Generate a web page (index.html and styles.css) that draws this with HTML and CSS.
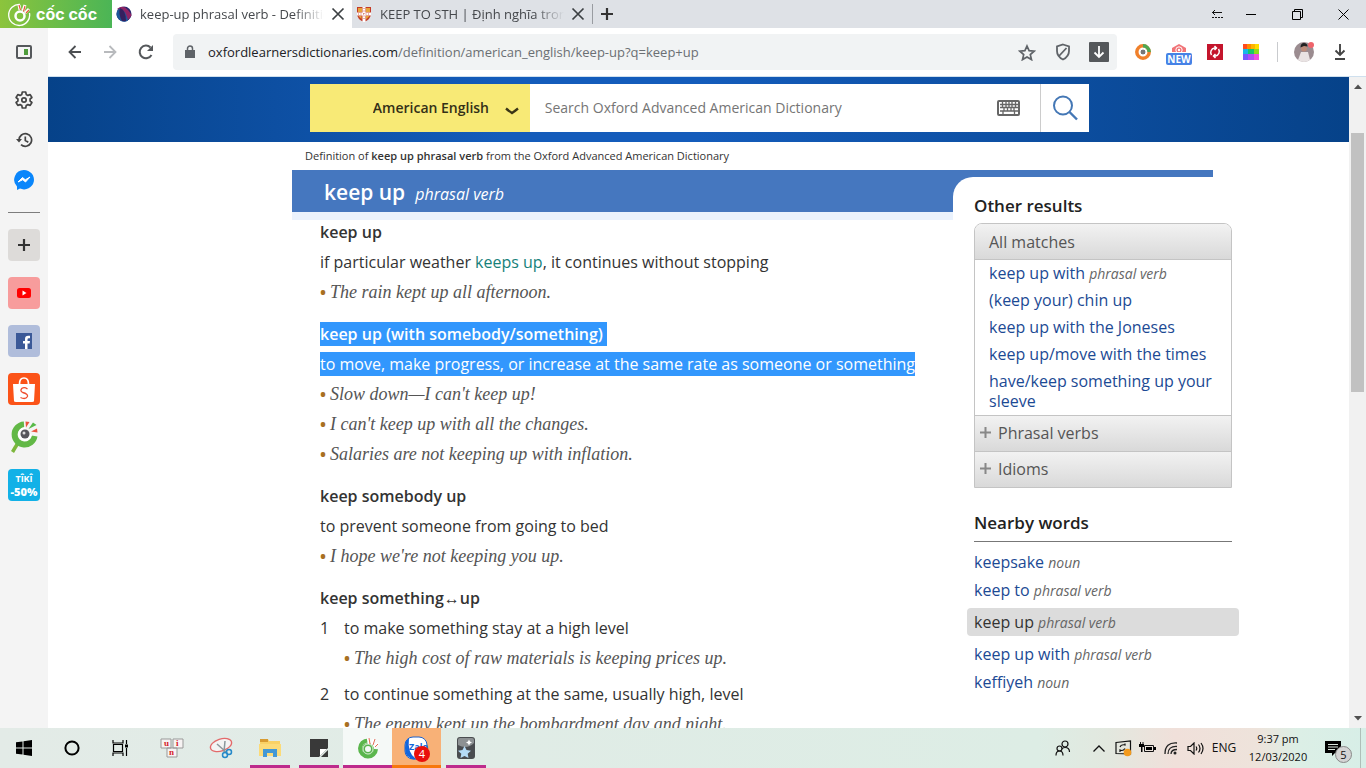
FILE: index.html
```html
<!DOCTYPE html>
<html lang="en">
<head>
<meta charset="utf-8">
<title>keep-up phrasal verb - Definition</title>
<link rel="stylesheet" href="styles.css">
</head>
<body>
<svg class="defs" aria-hidden="true">
  <symbol id="x" viewBox="0 0 14 14"><path d="M1.500 1.500l11 11M12.500 1.500l-11 11" stroke="#3c4043" stroke-width="1.700" fill="none"/></symbol>
  <symbol id="plus" viewBox="0 0 12 12"><path d="M6 0v12M0 6h12" stroke="currentColor" stroke-width="2.200"/></symbol>
  <symbol id="coc" viewBox="0 0 32 32">
    <path d="M10.500 21L4.500 31" stroke="#7db63c" stroke-width="3.500"/>
    <path d="M16 3.500A10 10 0 1 0 26.500 15" fill="none" stroke="#62b846" stroke-width="6"/>
    <path d="M17 6a7 7 0 1 0 7 8l-5-4z" fill="#fff"/>
    <circle cx="17" cy="13" r="4.500" fill="#56565b"/><circle cx="16" cy="12" r="1.500" fill="#ddd"/>
    <path d="M18 6.500L17.500.500l4 .5zM23 10.500l6-3 .5 4z" fill="#e9543d"/><path d="M20.500 8L25 1.500l3.500 2.500z" fill="#57b947"/>
  </symbol>
</svg>
<div class="window">
  <header class="tabs">
    <button class="brand" aria-label="Menu">
      <svg width="24" height="26" viewBox="0 0 24 26" fill="none" stroke="#fff"><path d="M12 3.500A10.500 10.500 0 1 0 21.500 12" stroke-width="1.300"/><circle cx="12" cy="15" r="4.500" stroke-width="2.500"/><path d="M12 9l-1-5M15 10l2-6M17 12l4-4" stroke-width="3"/><path d="M12.500 9l-1.500-5" stroke="#e8593e" stroke-width="1.200"/><path d="M15.500 10.500l1.500-5.500M18 12l3-3" stroke="#e8593e" stroke-width="1.200"/></svg>
      <span>cốc cốc</span>
    </button>
    <div class="tab tab-active">
      <svg width="16" height="16" viewBox="0 0 16 16"><circle cx="8" cy="8" r="7.500" fill="#29266e"/><path d="M1 3q6-5 11 1t3 6Q12 15 8 15.500 10 8 1 3z" fill="#8e2364"/><path d="M3 2.500q5 1 7 6t2 6A7.500 7.500 0 0 1 5 15Q.500 12 .500 8 .500 4.500 3 2.500z" fill="#1d579b"/><path d="M4 2q6 2 6 13L6 15Q2 8 4 2z" fill="#34205f"/></svg>
      <span class="tab-title">keep-up phrasal verb - Definition</span>
      <button class="icon close" aria-label="Close tab"><svg width="14" height="14"><use href="#x"/></svg></button>
    </div>
    <div class="tab">
      <svg width="16" height="16" viewBox="0 0 16 16"><path d="M1 1h14v7q0 5-7 8-7-3-7-8z" fill="#c43a26"/><path d="M2 2h4v4H2zM10 2h4v4h-4zM2.500 10h3v3zM10 10h3.500L10 13.500z" fill="#e7a43b"/><path d="M8 1v15M1 8h14" stroke="#fff" stroke-width="3"/><path d="M8 2v12M2 8h12" stroke="#c43a26" stroke-width=".8" stroke-dasharray="1 1.500"/></svg>
      <span class="tab-title">KEEP TO STH | Định nghĩa trong</span>
      <button class="icon close" aria-label="Close tab"><svg width="14" height="14"><use href="#x"/></svg></button>
    </div>
    <button class="icon new-tab" aria-label="New tab"><svg width="12" height="12"><use href="#plus"/></svg></button>
    <div class="controls">
      <button class="icon pin" aria-label="Tab options"><svg width="12" height="10" viewBox="0 0 12 10" stroke="#111" fill="none"><path d="M1 3.500h10M4 1L1.500 3.500 4 6M1 8.500h2m1 0h2m1 0h2m1 0h2"/></svg></button>
      <button class="icon" aria-label="Minimize"><svg width="10" height="10"><path d="M0 5.500h10" stroke="#000"/></svg></button>
      <button class="icon" aria-label="Restore"><svg width="11" height="11" fill="none" stroke="#000"><path d="M.5 2.500h8v8h-8zM2.500 2.500v-2h8v8h-2"/></svg></button>
      <button class="icon" aria-label="Close"><svg width="11" height="11" stroke="#000"><path d="M.5.500l10 10M10.500.500l-10 10"/></svg></button>
    </div>
  </header>

  <nav class="sidebar" aria-label="Shortcuts">
    <button class="icon" aria-label="Panel"><svg width="16" height="14" viewBox="0 0 16 14"><rect x="1" y="1" width="14" height="12" rx="1" fill="none" stroke="#55585b" stroke-width="2"/><path d="M8 4h4v6H8z" fill="#4f9c3c"/></svg></button>
    <button class="icon settings" aria-label="Settings"><svg width="18" height="18" viewBox="0 0 18 18" fill="none" stroke="#444" stroke-width="1.700" stroke-linejoin="round"><path d="M7.300 1h3.400l.5 2.400 1.700 1 2.300-.8 1.700 2.900L15.100 8v2l1.800 1.500-1.700 2.900-2.300-.8-1.700 1-.5 2.400H7.300l-.5-2.400-1.700-1-2.300.8-1.700-2.900L2.900 10V8L1.100 6.500l1.700-2.900 2.300.8 1.700-1z"/><circle cx="9" cy="9" r="2.200"/></svg></button>
    <button class="icon" aria-label="History"><svg width="17" height="16" viewBox="0 0 17 16" fill="none" stroke="#444" stroke-width="1.700"><path d="M3 8a6.300 6.300 0 1 1 2 4.600M9.300 4.500V8.500l3 1.700"/><path d="M0 7h6L3 10.500z" fill="#444" stroke="none"/></svg></button>
    <button class="icon" aria-label="Messenger"><svg width="20" height="20" viewBox="0 0 20 20"><path d="M10 0a10 9.700 0 1 1-4 18.600L3 20v-3.500A9.700 9.700 0 0 1 10 0z" fill="#0a86fb"/><path d="M4 12l4.500-4.500 2.800 2.300L16 7l-4.500 5L8.800 9.700z" fill="#fff" stroke="#fff"/></svg></button>
    <hr>
    <button class="tile tile-add" aria-label="Add"><svg width="12" height="12"><use href="#plus"/></svg></button>
    <button class="tile tile-youtube" aria-label="YouTube"><svg width="14" height="10"><rect width="14" height="10" rx="2.500" fill="#f00"/><path d="M5.500 2.500v5l4-2.500z" fill="#fff"/></svg></button>
    <button class="tile tile-facebook" aria-label="Facebook"><svg width="16" height="16"><path d="M0 0h16v16H0z" fill="#3b5998"/><path d="M9 16v-5.500H7V8h2V6q0-3.200 3.200-3.200H14v2.500h-1.200Q11.500 5.300 11.500 6.500V8H14l-.4 2.500h-2.100V16z" fill="#fff"/></svg></button>
    <button class="tile tile-shopee" aria-label="Shopee"><svg width="26" height="28" viewBox="0 0 26 28" fill="none"><path d="M2 9h22l-1 17q0 1-2 1H5q-2 0-2-1z" fill="#fff"/><path d="M8.500 9q0-6 4.500-6t4.500 6" stroke="#fff" stroke-width="1.700"/><path d="M16.500 14q-3-2.200-5.500-.7-2.500 2.700.7 4.200 5.500 1.500 4.800 4-2 3.500-7 1" stroke="#ee4d2d" stroke-width="1.300"/></svg></button>
    <button class="tile" aria-label="Cốc Cốc"><svg width="32" height="32"><use href="#coc"/></svg></button>
    <button class="tile tile-tiki"><span>TÎKÎ</span><b>-50%</b></button>
  </nav>

  <div class="toolbar">
    <button class="icon" aria-label="Back"><svg width="13" height="14" viewBox="0 0 13 14" fill="none" stroke="#4c4f52" stroke-width="1.800"><path d="M13 7H1.500M7.500 1L1.500 7l6 6"/></svg></button>
    <button class="icon" aria-label="Forward"><svg width="13" height="14" viewBox="0 0 13 14" fill="none" stroke="#b8babd" stroke-width="1.800"><path d="M0 7h11.500M5.500 1l6 6-6 6"/></svg></button>
    <button class="icon" aria-label="Reload"><svg width="16" height="16" viewBox="0 0 16 16"><path d="M13.500 11A6.300 6.300 0 1 1 12.500 3.500" fill="none" stroke="#55585b" stroke-width="2"/><path d="M15 1v6H9z" fill="#55585b"/></svg></button>
    <div class="address">
      <svg width="10" height="14" viewBox="0 0 10 14"><path d="M0 5h10v8H0z" fill="#5f6368"/><path d="M2.500 6V3.500a2.500 2.500 0 0 1 5 0V6" fill="none" stroke="#5f6368" stroke-width="1.500"/></svg>
      <div class="url" role="textbox" contenteditable="true" spellcheck="false" aria-label="Address"><b>oxfordlearnersdictionaries.com</b>/definition/american_english/keep-up?q=keep+up</div>
      <button class="icon" aria-label="Bookmark"><svg width="18" height="17" viewBox="0 0 18 17"><path d="M9 2l2.100 4.700 5 .5-3.800 3.400 1.200 5L9 12.900l-4.500 2.700 1.200-5-3.800-3.400 5-.5z" fill="none" stroke="#5f6368" stroke-width="1.700"/></svg></button>
      <button class="icon" aria-label="Blocker"><svg width="16" height="18" viewBox="0 0 16 18" fill="none" stroke="#5f6368" stroke-width="1.800"><path d="M8 1.500l6 2V8q0 5.500-6 8.500Q2 13.500 2 8V3.500zM4 13l7.500-8"/></svg></button>
      <button class="icon" aria-label="Save"><svg width="20" height="20"><rect width="20" height="20" rx="1" fill="#55585b"/><path d="M10 4v11M5.500 10.500L10 15l4.500-4.500" fill="none" stroke="#fff" stroke-width="1.800"/></svg></button>
    </div>
    <div class="extensions">
      <button class="icon" aria-label="Extension"><svg width="18" height="18" viewBox="0 0 18 18" fill="none"><circle cx="9" cy="9" r="6.200" stroke="#f0802b" stroke-width="3.500"/><path d="M9 2.800A6.200 6.200 0 0 1 15.200 9" stroke="#4ea853" stroke-width="3.500"/><circle cx="9" cy="9" r="3" fill="#777" stroke="#fff"/></svg></button>
      <button class="icon" aria-label="New extension"><svg width="26" height="28" viewBox="0 0 26 28"><path d="M6 14V10l7-4 7 4v4z" fill="#f17478"/><circle cx="13" cy="12" r="3.200" fill="none" stroke="#fff"/><circle cx="13" cy="12" r="1.200" fill="#fff"/><rect y="15" width="26" height="12" rx="2" fill="#4682e6"/><text x="13" y="25" text-anchor="middle" class="badge-new">NEW</text></svg></button>
      <button class="icon" aria-label="Sync"><svg width="16" height="16" fill="none" stroke="#fff" stroke-width="1.500"><path d="M0 0h16v16H0z" fill="#c4152c" stroke="none"/><path d="M4.500 11A4.500 4.500 0 0 1 7.500 4h1.500M11.500 5A4.500 4.500 0 0 1 8.500 12H7M7.500 2l2 2-2 2M8.500 10l-2 2 2 2"/></svg></button>
      <button class="icon" aria-label="Colours"><svg width="16" height="16"><path d="M0 0h4v5H0z" fill="#ff4b1f"/><path d="M4 0h4v5H4z" fill="#ff8a00"/><path d="M8 0h4v5H8z" fill="#ffb400"/><path d="M12 0h4v5h-4z" fill="#ffdc00"/><path d="M0 5h5v5H0z" fill="#17b8e8"/><path d="M5 5h6v5H5z" fill="#15c76c"/><path d="M11 5h5v5h-5z" fill="#8ddb1d"/><path d="M0 10h5v6H0z" fill="#7557ff"/><path d="M5 10h6v6H5z" fill="#b14cf5"/><path d="M11 10h5v6h-5z" fill="#f14de0"/></svg></button>
    </div>
    <div class="account">
      <button class="icon" aria-label="Profile"><svg width="20" height="20"><circle cx="10" cy="10" r="10" fill="#9b8c90"/><path d="M4 18l3-8h7l2 8q-6 4-12 0z" fill="#e9e3e3"/><circle cx="10" cy="6.500" r="3" fill="#bd8c7a"/><path d="M6.500 5.500q0-4.500 3.500-4.500t3.500 3.500l-3.500-.5z" fill="#222"/><circle cx="17" cy="3" r="3" fill="#ef646b"/></svg></button>
      <button class="icon" aria-label="Downloads"><svg width="12" height="16" fill="none" stroke="#444" stroke-width="1.900"><path d="M6 0v11M1.500 6.500L6 11l4.500-4.500M1 15h10"/></svg></button>
    </div>
  </div>

  <div class="viewport">
    <main class="page">
      <form class="search-band">
        <div class="search">
          <label class="dict">
            <select aria-label="Dictionary"><option>American English</option></select>
            <svg class="chevron" width="14" height="8" viewBox="0 0 14 8"><path d="M1 1.500q3 2.500 6 4.500 3-2 6-4.500" fill="none" stroke="#3a3516" stroke-width="2.300"/></svg>
          </label>
          <input type="text" placeholder="Search Oxford Advanced American Dictionary" aria-label="Search">
          <button type="button" class="icon keyboard" aria-label="Keyboard"><svg width="24" height="16" viewBox="0 0 24 16"><rect x="1" y="1" width="21" height="14" rx="1" fill="#fff" stroke="#666" stroke-width="2"/><path d="M3 4.500h18M3 7.500h18M3 11h18" stroke="#666" stroke-width="1.400"/><path d="M5.500 2v6M9 2v5M12 2v5M15 2v5M18.500 2v6M7 7v4M10.500 7v4M14 7v4M17 7v4M6 11v3M17.500 11v3" stroke="#666" stroke-width="1.300"/></svg></button>
          <button type="submit" class="icon go" aria-label="Search"><svg width="26" height="26" viewBox="0 0 26 26" fill="none" stroke="#4477b5" stroke-width="2"><circle cx="11" cy="10.500" r="9"/><path d="M17.500 17l7.500 7.500" stroke-width="2.400"/></svg></button>
        </div>
      </form>
      <p class="crumb">Definition of <b>keep up phrasal verb</b> from the Oxford Advanced American Dictionary</p>
      <div class="entry">
        <article>
          <header class="title"><h1>keep up</h1><em>phrasal verb</em></header>
          <div class="senses">
            <section>
              <h2>keep up</h2>
              <p>if particular weather <a href="#keep" class="term">keeps up</a>, it continues without stopping</p>
              <ul><li>The rain kept up all afternoon.</li></ul>
            </section>
            <section>
              <h2><mark class="selected-head">keep up (with somebody/something)</mark></h2>
              <p><mark>to move, make progress, or increase at the same rate as someone or something</mark></p>
              <ul><li>Slow down—I can't keep up!</li><li>I can't keep up with all the changes.</li><li>Salaries are not keeping up with inflation.</li></ul>
            </section>
            <section>
              <h2>keep somebody up</h2>
              <p>to prevent someone from going to bed</p>
              <ul><li>I hope we're not keeping you up.</li></ul>
            </section>
            <section>
              <h2>keep something↔up</h2>
              <ol>
                <li><p>to make something stay at a high level</p><ul><li>The high cost of raw materials is keeping prices up.</li></ul></li>
                <li><p>to continue something at the same, usually high, level</p><ul><li>The enemy kept up the bombardment day and night.</li></ul></li>
              </ol>
            </section>
          </div>
        </article>
        <div class="aside-wrap">
          <aside>
            <h3>Other results</h3>
            <div class="accordion">
              <h4 class="bar bar-open">All matches</h4>
              <ul class="matches">
                <li><a href="#m1">keep up with <i>phrasal verb</i></a></li>
                <li><a href="#m2">(keep your) chin up</a></li>
                <li><a href="#m3">keep up with the Joneses</a></li>
                <li><a href="#m4">keep up/move with the times</a></li>
                <li><a href="#m5">have/keep something up your sleeve</a></li>
              </ul>
              <button class="bar"><svg width="11" height="11"><use href="#plus"/></svg>Phrasal verbs</button>
              <button class="bar"><svg width="11" height="11"><use href="#plus"/></svg>Idioms</button>
            </div>
            <h3 class="nearby-title">Nearby words</h3>
            <ul class="nearby">
              <li><a href="#n1">keepsake <i>noun</i></a></li>
              <li><a href="#n2">keep to <i>phrasal verb</i></a></li>
              <li class="current"><a href="#n3">keep up <i>phrasal verb</i></a></li>
              <li><a href="#n4">keep up with <i>phrasal verb</i></a></li>
              <li><a href="#n5">keffiyeh <i>noun</i></a></li>
            </ul>
          </aside>
        </div>
      </div>
    </main>
    <div class="scrollbar" aria-hidden="true">
      <svg width="8" height="5"><path d="M0 5l4-4.500L8 5z" fill="#505050"/></svg>
      <div class="track"><div class="thumb"></div></div>
      <svg width="8" height="5"><path d="M0 0l4 4.500L8 0z" fill="#505050"/></svg>
    </div>
  </div>

  <footer class="taskbar">
    <div class="system">
      <button class="icon" aria-label="Start"><svg width="16" height="16"><path d="M0 2.300l6.500-.9v6.100H0zM7.500 1.200L16 0v7.500H7.500zM0 8.500h6.500v6.100L0 13.700zM7.500 8.500H16V16l-8.500-1.200z"/></svg></button>
      <button class="icon" aria-label="Cortana"><svg width="16" height="16"><circle cx="8" cy="8" r="6.600" fill="none" stroke="#000" stroke-width="2"/></svg></button>
      <button class="icon" aria-label="Task view"><svg width="17" height="16" fill="none" stroke="#000" stroke-width="1.200"><path d="M1 0v3h10V0M1 16v-3h10v3M1.500 4.500h9v7h-9zM14.500 0v4M14.500 8v8"/><path d="M13 4.500h3v3h-3z" fill="#000" stroke="none"/></svg></button>
    </div>
    <div class="apps">
      <button class="icon" aria-label="UniKey"><svg width="24" height="20" viewBox="0 0 24 20"><g fill="#f7f3f3" stroke="#999"><path d="M1 1h10v9H1zM13 1h10v9H13zM7 10h10v9H7z"/></g><g class="key-letter"><text x="4" y="8">u</text><text x="16" y="8">i</text><text x="9" y="17">n</text></g></svg></button>
      <button class="icon" aria-label="Snipping Tool"><svg width="24" height="22" viewBox="0 0 24 22" fill="none"><ellipse cx="12" cy="8" rx="11" ry="6" transform="rotate(-18 12 8)" fill="#f4f4f4" stroke="#e36a6a" stroke-width="1.300"/><path d="M8 7l9 8M16 4l-1 11" stroke="#8b979c" stroke-width="1.500"/><circle cx="16" cy="18" r="2.500" stroke="#2689c9" stroke-width="1.500"/><circle cx="20" cy="15" r="2.500" stroke="#2689c9" stroke-width="1.500"/></svg></button>
      <button class="icon running" aria-label="File Explorer"><svg width="22" height="18" viewBox="0 0 22 18"><path d="M1 0h8l1 2h11v15H1z" fill="#f9d165"/><path d="M1 0h8v3H1z" fill="#d89b31"/><path d="M0 5h22v12H0z" fill="#fcdb78"/><path d="M4 18v-8h14v8h-4v-4H8v4z" fill="#4298d5"/></svg></button>
      <button class="icon running" aria-label="Sticky Notes"><svg width="18" height="18"><path d="M0 0h18v9l-9 9H0z" fill="#393939"/><path d="M10 17v-7h7z" fill="#fff"/><path d="M18 11v7h-7z" fill="#393939"/></svg></button>
      <button class="icon running active" aria-label="Cốc Cốc"><svg width="22" height="22" viewBox="0 0 22 22" fill="none"><path d="M11 3.500A8 8 0 1 0 19 12" stroke="#5bb64d" stroke-width="4"/><circle cx="11" cy="12" r="4.500" stroke="#59b34e" stroke-width="3"/><circle cx="11" cy="12" r="5" stroke="#d9f0d4"/><path d="M12 7l-1-6M15 8l2-6M17 10l4-4" stroke="#fff" stroke-width="2.500"/><path d="M13 7l-1-6M16 8l2-6M18 10l3-3" stroke="#e46b58"/></svg></button>
      <button class="icon alert" aria-label="Zalo, 4 new"><svg width="26" height="26" viewBox="0 0 26 26"><rect x="1" y="2" width="22" height="22" rx="8" fill="#fff" stroke="#1d61cb"/><path d="M5 3Q1 5 1 13t4 9q2 3 7 2Q3 18 5 3z" fill="#1366dd"/><text x="5" y="15" class="zalo">Zalo</text></svg><span class="count">4</span></button>
      <button class="icon running" aria-label="Media"><svg width="18" height="22" viewBox="0 0 18 22"><rect width="18" height="22" rx="3" fill="#4a4d50"/><path d="M1 8Q10 13 17 6V3q0-2-2-2H3Q1 1 1 3z" fill="#8d9193"/><path d="M7.500 9l2 4 4.500.7-3.300 3 .8 4.300-4-2-4 2 .8-4.300-3.300-3 4.500-.7z" fill="#b5dcf7"/><path d="M12 2.500l1 2 2 1-2 1-1 2-1-2-2-1 2-1z" fill="#fff"/></svg></button>
    </div>
    <div class="tray">
      <button class="icon people" aria-label="People"><svg width="16" height="16" fill="none" stroke="#111" stroke-width="1.200"><circle cx="10" cy="4" r="3"/><path d="M10 7.500q4.500 0 4.500 4.500"/><circle cx="4.500" cy="8.500" r="2.500"/><path d="M1 15.500q0-4.500 3.500-4.500T8 15.500M7 9q1-1.500 3-1.500"/></svg></button>
      <button class="icon" aria-label="Show hidden icons"><svg width="12" height="7" fill="none" stroke="#111" stroke-width="1.300"><path d="M.5 6.500L6 1l5.500 5.500"/></svg></button>
      <button class="icon" aria-label="Update"><svg width="17" height="17" fill="none" stroke="#111" stroke-width="1.200"><path d="M1 2.500L15.500 1v13L1 13.500zM5 7q1-3 5-2v-1.500M10 8.500q-2 3-5 1.500V12"/><circle cx="12.500" cy="12.500" r="3.800" fill="#f39a1d" stroke="none"/></svg></button>
      <button class="icon" aria-label="Battery"><svg width="17" height="12"><path d="M5.500 3.500h9v6h-9z" fill="none" stroke="#111"/><path d="M7 5h6v3H7zM15 5h2v3h-2zM0 2h5v3H0zM2 5h1.500v5H2z"/><path d="M1.500 0v2M4 0v2" stroke="#111"/></svg></button>
      <button class="icon" aria-label="Wi-Fi"><svg width="14" height="14" fill="none" stroke="#222" stroke-width="1.300"><path d="M1 13Q1 1 13 2M4 13q0-8 9-7.500M7 13q0-4.500 6-4.500"/><circle cx="11" cy="12" r="1.500" fill="#222" stroke="none"/></svg></button>
      <button class="icon" aria-label="Volume"><svg width="17" height="13" fill="none" stroke="#111" stroke-width="1.200"><path d="M1 4.500h2.500L7 1v11L3.500 8.500H1zM9 4.500q1.500 2 0 4M11.500 2.500q3 4 0 8M14 1q4 5.500 0 11"/></svg></button>
      <span class="lang">ENG</span>
      <time class="clock"><span>9:37 pm</span><span>12/03/2020</span></time>
      <button class="icon notices" aria-label="Notifications, 5"><svg width="16" height="15"><path d="M0 0h16v12H10l-3 3v-3H0z"/><path d="M3 3.500h10M3 6h10M3 8.500h7" stroke="#dce7df" stroke-width="1.200"/></svg><span class="note-count">5</span></button>
    </div>
  </footer>
</div>
</body>
</html>
```

FILE: styles.css
```css
* { box-sizing: border-box; }
body, h1, h2, h3, h4, p, ul, ol { margin: 0; padding: 0; }
ul, ol { list-style: none; }
body { font-family: "Open Sans", "Noto Sans", sans-serif; font-size: 16px; color: #333; background: #fff; }
button { border: 0; padding: 0; background: none; font: inherit; color: inherit; }
a { color: #1c4a94; text-decoration: none; }
svg { display: block; flex: none; }
.defs { display: none; }
.icon { display: flex; align-items: center; justify-content: center; flex: none; }

.window { display: grid; grid-template: 28px 49px minmax(0, 1fr) 40px / 48px minmax(0, 1fr); height: 100vh; overflow: hidden; }

/* Tab strip */
.tabs { grid-column: 1 / -1; display: flex; background: #dee1e6; }
.brand { display: flex; align-items: center; gap: 4px; width: 112px; padding-left: 8px; color: #fff; background: linear-gradient(90deg, #8cc43c, #4bb556); font: 700 16px/20px Inter, sans-serif; white-space: nowrap; }
.tab { display: flex; align-items: center; width: 240px; padding: 0 8px 0 4px; gap: 8px; }
.tab-active { background: #fff; }
.tab-title { flex: 1; overflow: hidden; white-space: nowrap; font-size: 13px; line-height: 20px; color: #45484c; mask-image: linear-gradient(90deg, #000 84%, transparent); }
.close { width: 12px; }
.new-tab { width: 28px; border-left: 1px solid #999ca1; color: #333; height: 20px; margin-top: 4px; }
.controls { display: flex; margin-left: auto; }
.controls .icon { width: 46px; }
.controls .pin { width: 22px; }

/* Sidebar */
.sidebar { grid-row: 2 / 4; display: flex; flex-direction: column; align-items: center; padding-top: 4px; background: #f4f4f4; }
.sidebar .icon { width: 40px; height: 40px; }
.sidebar .settings { margin-top: 8px; }
.sidebar hr { width: 32px; height: 1px; margin: 12px 0 16px; border: 0; background: #7d7d7d; }
.tile { display: flex; flex-direction: column; align-items: center; justify-content: center; width: 32px; height: 32px; flex: none; margin-bottom: 16px; border-radius: 4px; }
.tile-add { background: #dddbd9; color: #333; }
.tile-youtube { background: #f79c9c; }
.tile-facebook { background: #b0bddb; }
.tile-shopee { background: #fb5318; }
.tile-tiki { background: #12b1e7; color: #fff; font: 700 9px/13px "Open Sans", sans-serif; }
.tile-tiki b { font-size: 11px; line-height: 14px; }

/* Toolbar */
.toolbar { display: flex; align-items: center; padding: 0 8px; background: #fff; border-bottom: 1px solid #cfe0ee; }
.toolbar .icon { width: 36px; height: 36px; }
.address { flex: 1; display: flex; align-items: center; height: 36px; margin: 0 8px 0 9px; padding-left: 12px; background: #f1f3f4; border-radius: 4px; }
.url { flex: 1; margin-left: 13px; overflow: hidden; white-space: nowrap; font-size: 13px; line-height: 20px; color: #6b6f73; }
.url b { font-weight: 400; color: #202124; }
.extensions, .account { display: flex; align-items: center; }
.account { margin-left: 8px; }
.extensions::after { content: ""; width: 1px; height: 20px; margin-left: 8px; background: #c9cbce; }
.badge-new { font: 700 10px "Open Sans", sans-serif; fill: #fff; }

/* Page */
.viewport { display: flex; min-height: 0; }
.page { flex: 1; min-width: 0; overflow: hidden; }
.search-band { display: flex; justify-content: center; padding: 7px 0 10px 2px; background: linear-gradient(90deg, #064289, #145cbb 35%, #145cbb 50%, #064289); }
.search { display: flex; width: 60%; height: 48px; background: #fff; }
.dict { position: relative; width: 220px; }
.dict select { width: 100%; height: 100%; border: 0; padding-left: 63px; appearance: none; background: #f8ea76; color: #333017; font: 600 14px/20px "Open Sans", sans-serif; }
.chevron { position: absolute; right: 11px; top: 23px; }
.search input { flex: 1; min-width: 0; border: 0; padding: 0 15px; background: none; font: 14px/20px "Open Sans", sans-serif; }
.search input::placeholder { color: #757575; }
.keyboard { width: 62px; }
.go { width: 49px; border-left: 1px solid #ccc; }
.crumb { padding: 6px 0 6px 257px; font-size: 11px; line-height: 16px; }
.crumb b { font-weight: 600; }
.entry { display: flex; width: 921px; margin-left: 244px; border-top: 7px solid #4577bf; }
article { flex: 1; min-width: 0; }
.title { display: flex; align-items: baseline; gap: 10px; padding: 0 32px 5px; background: #4577bf; color: #fff; }
.title h1 { font-size: 21px; line-height: 30px; font-weight: 600; }
.title em { font-size: 16px; }
.senses { display: flex; flex-direction: column; gap: 18px; padding: 0 28px; border-top: 8px solid #eaf2fd; line-height: 24px; }
.senses section, .senses ul, .senses ol > li { display: flex; flex-direction: column; gap: 6px; }
h2 { font-size: 16px; line-height: 24px; font-weight: 600; }
.term { color: #16817a; }
mark { display: inline-block; background: #3297fd; color: #fff; }
.selected-head { padding-right: 4px; }
.senses ul li { display: flex; gap: 4px; font: italic 18px/24px "Liberation Serif", serif; color: #555; white-space: nowrap; }
.senses ul li::before { content: "•"; color: #a8701f; font: 700 16px/24px "Open Sans", sans-serif; }
.senses ol { display: flex; flex-direction: column; gap: 12px; counter-reset: n; }
.senses ol > li { position: relative; counter-increment: n; padding-left: 24px; }
.senses ol > li::before { content: counter(n); position: absolute; left: 0; }

.aside-wrap { width: 260px; background: linear-gradient(#4577bf 24px, #fff 24px); }
aside { margin-right: -26px; padding: 17px 7px 0 21px; background: #fff; border-top-left-radius: 20px; }
h3 { font-size: 17px; line-height: 24px; font-weight: 600; color: #222; }
.accordion { width: 258px; margin-top: 5px; border: 1px solid #c4c4c4; border-radius: 8px 8px 0 0; overflow: hidden; }
.bar { display: flex; align-items: center; gap: 7px; width: 100%; height: 36px; padding: 0 5px 2px; border-top: 1px solid #c4c4c4; background: linear-gradient(#f2f2f2, #d9d9d9); color: #555; font-size: 16px; line-height: 24px; font-weight: 400; }
.bar svg { color: #888; }
.bar-open { padding: 0 14px; border-top: 0; border-bottom: 1px solid #c4c4c4; }
.matches { display: flex; flex-direction: column; gap: 7px; padding: 3px 14px 4px; line-height: 20px; }
i { font-size: 14px; line-height: 16px; color: #666; }
.nearby-title { width: 258px; margin-top: 23px; padding-bottom: 6px; border-bottom: 1px solid #777; }
.nearby { margin: 6px -7px 0 0; line-height: 28px; }
.nearby .current { margin: 4px 0 4px -7px; padding-left: 7px; background: #dcdcdc; border-radius: 4px; }
.current a { color: #333; }

.scrollbar { display: flex; flex-direction: column; align-items: center; width: 17px; padding: 7px 0; background: #f1f1f1; }
.track { flex: 1; width: 13px; padding: 44px 0; }
.thumb { height: 48%; background: #c1c1c1; }

/* Taskbar */
.taskbar { grid-column: 1 / -1; display: flex; background: linear-gradient(90deg, #e3ebe7, #ddede5 76%, #e2e8df 81%, #f0e0da 86%, #eee3db 92%, #dcefe6 95%, #d7eee7); color: #111; }
.system, .apps, .tray { display: flex; }
.system .icon { width: 48px; }
.apps { margin-left: 3px; }
.apps .icon { position: relative; width: 49px; }
.apps .running { background: linear-gradient(#bd2b8c, #bd2b8c) center bottom / 40px 3px no-repeat; }
.apps .active { background: linear-gradient(#bd2b8c, #bd2b8c) center bottom / 100% 3px no-repeat #f5f9f7; }
.apps .alert { background: linear-gradient(#f7770d, #f7770d) center bottom / 100% 3px no-repeat #f8b177; }
.count { position: absolute; right: 11px; top: 18px; width: 16px; height: 16px; border-radius: 8px; background: #e9100c; color: #fff; font-size: 11px; line-height: 16px; text-align: center; }
.key-letter { font: 700 9px "Liberation Serif", serif; fill: #d5222a; }
.zalo { font: 700 9px "Open Sans", sans-serif; fill: #1267db; }
.tray { margin-left: auto; align-items: center; font-size: 12px; line-height: 18px; padding-right: 5px; }
.tray .icon { width: 24px; height: 40px; }
.tray .people { width: 48px; }
.lang { width: 34px; text-align: center; }
.clock { display: flex; flex-direction: column; width: 74px; text-align: center; font-size: 11px; }
.tray .notices { position: relative; width: 46px; border-right: 1px solid #aebfb8; padding-right: 10px; }
.note-count { position: absolute; left: 20px; top: 18px; width: 17px; height: 17px; border: 1px solid #888; border-radius: 9px; background: #d4d4d4; font-size: 11px; line-height: 15px; text-align: center; }
```
